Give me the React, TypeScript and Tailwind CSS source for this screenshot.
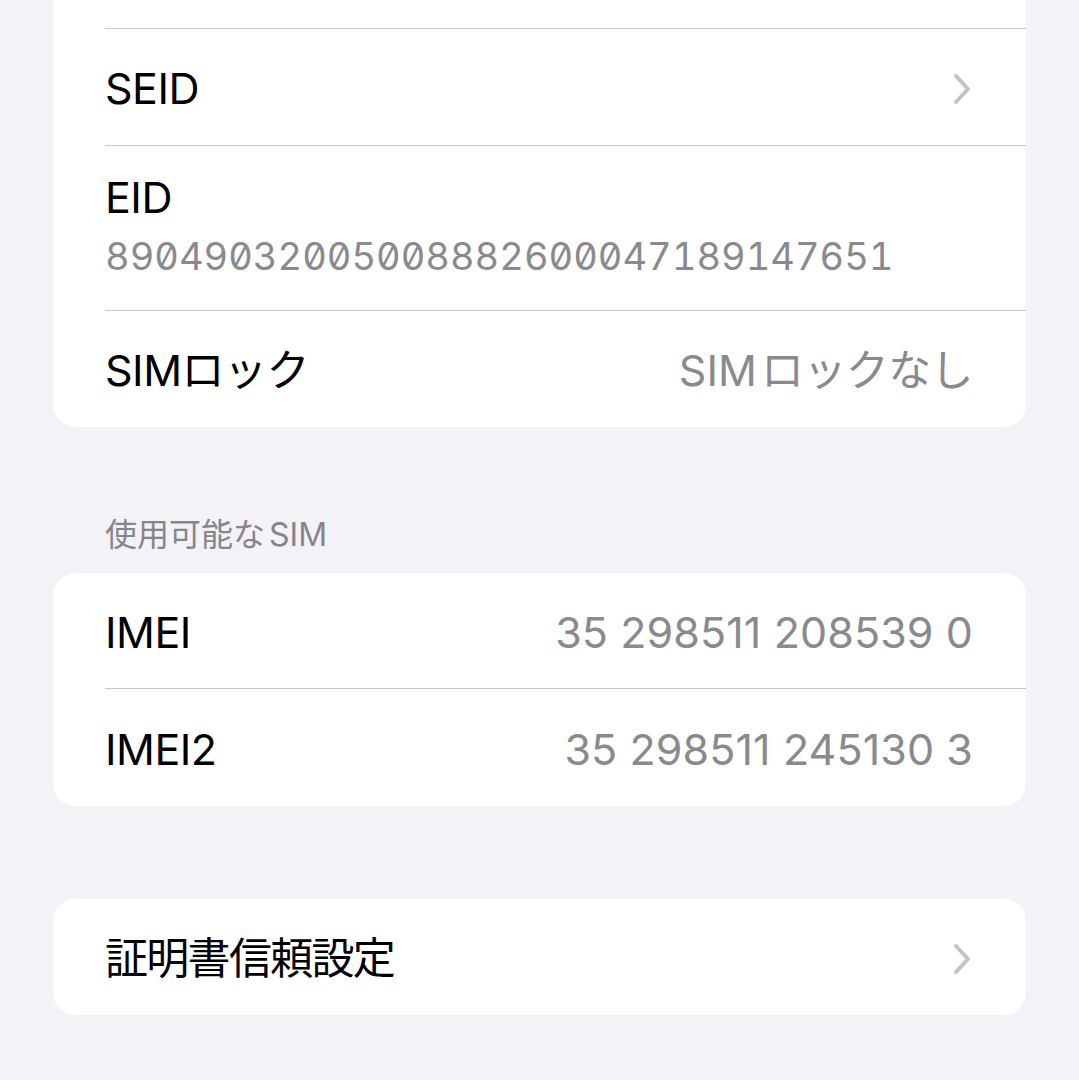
import React from 'react';

const font = { fontFamily: 'Inter, "Noto Sans CJK JP", sans-serif' };

type RowProps = {
  label: React.ReactNode;
  value?: React.ReactNode;
  chevron?: boolean;
  last?: boolean;
  tall?: boolean;
};

function Chevron() {
  return (
    <svg width="20" height="32" viewBox="0 0 20 32" className="shrink-0 mr-[1px]">
      <path d="M4 3 L16 16 L4 29" fill="none" stroke="#c4c4c7" strokeWidth="4" strokeLinecap="round" strokeLinejoin="round" />
    </svg>
  );
}

function Row({ label, value, chevron, last, tall }: RowProps) {
  return (
    <div className="pl-[52px]">
      <div
        className={`${tall ? 'h-[117px]' : 'h-[116px]'} flex items-center justify-between pt-[3px] pr-[53px] ${last ? '' : 'border-b border-[#c8c8cc]'}`}
      >
        <span className="text-[43px] text-black tracking-[-0.5px]">{label}</span>
        {value && <span className="text-[43px] text-[#8a8a8e] tracking-[0.1px]">{value}</span>}
        {chevron && <Chevron />}
      </div>
    </div>
  );
}

export default function App() {
  return (
    <div className="min-h-[1080px] bg-[#f2f2f7] overflow-hidden" style={font}>
      <div className="mx-[53px] bg-white rounded-b-[22px]">
        <div className="pl-[52px]">
          <div className="h-[29px] border-b border-[#c8c8cc]" />
        </div>
        <Row label="SEID" chevron tall />
        <div className="pl-[52px]">
          <div className="h-[165px] border-b border-[#c8c8cc] flex flex-col justify-center pr-[54px] pb-[2px]">
            <span className="text-[43px] text-black leading-[52px] tracking-[-0.5px]">EID</span>
            <span className="mt-[5px] text-[38px] text-[#8a8a8e] leading-[56px] tabular-nums slashed-zero tracking-[0px]">
              89049032005008882600047189147651
            </span>
          </div>
        </div>
        <Row
          label="SIMロック"
          value={
            <>
              SIM<span className="ml-[4px] tracking-[-0.6px]">ロックなし</span>
            </>
          }
          last
        />
      </div>

      <div className="h-[146px] flex items-end pb-[19px] pl-[105px]">
        <span className="text-[32px] leading-[38px] text-[#86868a]">
          使用可能な<span className="ml-[4px]">SIM</span>
        </span>
      </div>

      <div className="mx-[53px] bg-white rounded-[22px]">
        <Row label="IMEI" value="35 298511 208539 0" />
        <Row label="IMEI2" value="35 298511 245130 3" last tall />
      </div>

      <div className="h-[93px]" />

      <div className="mx-[53px] bg-white rounded-[22px]">
        <Row label={<span className="tracking-[-1.7px]">証明書信頼設定</span>} chevron last />
      </div>
    </div>
  );
}
